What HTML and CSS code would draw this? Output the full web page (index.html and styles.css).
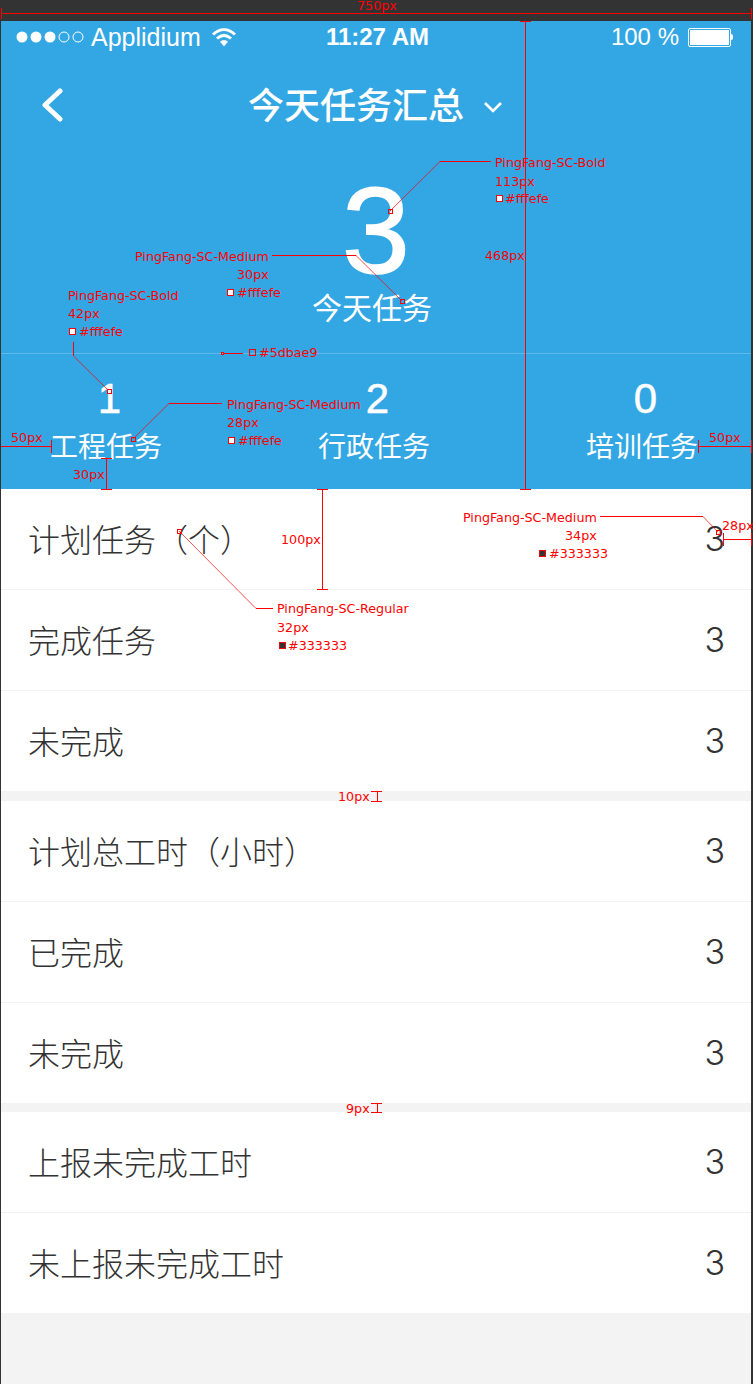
FILE: index.html
```html
<!DOCTYPE html>
<html>
<head>
    <title>今天任务汇总</title>
    <link rel="stylesheet" href="styles.css">
</head>
<body>
    <div class="frame">
        <div class="hero">
            <div class="status">
                <div class="status-left">
                    <svg class="signal" width="68" height="14" viewBox="0 0 68 14">
                        <circle cx="6" cy="7" r="5.5" fill="#fff"/>
                        <circle cx="20" cy="7" r="5.5" fill="#fff"/>
                        <circle cx="34" cy="7" r="5.5" fill="#fff"/>
                        <circle cx="48" cy="7" r="5" fill="none" stroke="#fff"/>
                        <circle cx="62" cy="7" r="5" fill="none" stroke="#fff"/>
                    </svg>
                    <span class="carrier">Applidium</span>
                    <svg class="wifi" width="26" height="20" viewBox="0 0 26 20">
                        <path d="M2 7.5C9 1 17 1 24 7.5M6 11.5C10.500 7.500 15.500 7.500 20 11.500" fill="none" stroke="#fff" stroke-width="3"/>
                        <path d="M9 14.500C11.500 12.500 14.500 12.500 17 14.500L13 19.500Z" fill="#fff"/>
                    </svg>
                </div>
                <div class="clock">11:27 AM</div>
                <div class="status-right">
                    <span class="percent">100 %</span>
                    <div class="battery"><div class="battery-fill"></div></div>
                    <div class="battery-tip"></div>
                </div>
            </div>
            <div class="nav">
                <svg class="back" width="24" height="34" viewBox="0 0 24 34">
                    <path d="M20 3L5 17L20 31" fill="none" stroke="#fff" stroke-width="5" stroke-linecap="round" stroke-linejoin="round"/>
                </svg>
                <h1 class="title">今天任务汇总</h1>
                <svg class="caret" width="20" height="12" viewBox="0 0 20 12">
                    <path d="M2 2L10 10L18 2" fill="none" stroke="#fff" stroke-width="2.600"/>
                </svg>
            </div>
            <div class="total">
                <div class="total-num">3</div>
                <div class="total-label">今天任务</div>
            </div>
            <div class="stats">
                <div class="stat">
                    <div class="stat-num">1</div>
                    <div class="stat-label">工程任务</div>
                </div>
                <div class="stat">
                    <div class="stat-num">2</div>
                    <div class="stat-label">行政任务</div>
                </div>
                <div class="stat">
                    <div class="stat-num">0</div>
                    <div class="stat-label">培训任务</div>
                </div>
            </div>
        </div>

        <div class="group">
            <div class="row"><span>计划任务（个）</span><span class="val">3</span></div>
            <div class="row"><span>完成任务</span><span class="val">3</span></div>
            <div class="row"><span>未完成</span><span class="val">3</span></div>
        </div>
        <div class="group group-mid">
            <div class="row"><span>计划总工时（小时）</span><span class="val">3</span></div>
            <div class="row"><span>已完成</span><span class="val">3</span></div>
            <div class="row"><span>未完成</span><span class="val">3</span></div>
        </div>
        <div class="group group-last">
            <div class="row"><span>上报未完成工时</span><span class="val">3</span></div>
            <div class="row"><span>未上报未完成工时</span><span class="val">3</span></div>
        </div>
    </div>

    <!-- red spec marks drawn over the design -->
    <svg class="marks" width="753" height="1384" viewBox="0 0 753 1384">
        <path d="M1.500 13.500H751.500M1.500 8V19M751.500 8V19"/>
        <text x="357" y="10">750px</text>

        <path d="M525.500 21V489M520 21.500H531M520 489.500H531"/>
        <text x="485" y="260">468px</text>

        <path class="thin" d="M390 211L440 161.500"/>
        <path d="M440 161.500H491"/>
        <rect x="388.500" y="209.500" width="4" height="4"/>
        <text x="495" y="167">PingFang-SC-Bold</text>
        <text x="495" y="186">113px</text>
        <rect class="swatch" x="496.500" y="195.500" width="6" height="6"/>
        <text x="505" y="203">#fffefe</text>

        <path class="thin" d="M356 255.500L402 301"/>
        <path d="M272 255.500H356"/>
        <rect x="400.500" y="299.500" width="4" height="4"/>
        <text x="135" y="261">PingFang-SC-Medium</text>
        <text x="237" y="279">30px</text>
        <rect class="swatch" x="227.500" y="289.500" width="6" height="6"/>
        <text x="237" y="297">#fffefe</text>

        <path class="thin" d="M73.500 356L109 391"/>
        <path d="M73.500 342V356"/>
        <rect class="swatch" x="107.500" y="389.500" width="4" height="4"/>
        <text x="68" y="300">PingFang-SC-Bold</text>
        <text x="68" y="318">42px</text>
        <rect class="swatch" x="69.500" y="328.500" width="6" height="6"/>
        <text x="79" y="336">#fffefe</text>

        <path d="M224 353.500H243"/>
        <rect x="221.500" y="352.500" width="2" height="2"/>
        <rect class="hollow" x="249.500" y="349.500" width="6" height="6"/>
        <text x="259" y="357">#5dbae9</text>

        <path class="thin" d="M133 439L169 403.500"/>
        <path d="M169 403.500H222"/>
        <rect x="131.500" y="437.500" width="4" height="4"/>
        <text x="227" y="409">PingFang-SC-Medium</text>
        <text x="227" y="427">28px</text>
        <rect class="swatch" x="228.500" y="437.500" width="6" height="6"/>
        <text x="238" y="445">#fffefe</text>

        <path d="M1 446.500H51.500M51.500 440V453"/>
        <text x="11" y="442">50px</text>
        <path d="M106.500 458V489M101 458.500H112M101 489.500H112"/>
        <text x="73" y="479">30px</text>
        <path d="M698.500 446.500H751.500M698.500 440V453M751.500 440V453"/>
        <text x="709" y="442">50px</text>

        <path d="M322.500 489V589M317 489.500H328M317 589.500H328"/>
        <text x="281" y="544">100px</text>

        <path class="thin" d="M703 516.500L718 532"/>
        <path d="M600 516.500H703"/>
        <rect x="716.500" y="530.500" width="4" height="4"/>
        <text x="463" y="522">PingFang-SC-Medium</text>
        <text x="565" y="540">34px</text>
        <rect class="dark" x="539.500" y="550.500" width="6" height="6"/>
        <text x="549" y="558">#333333</text>

        <path d="M723.500 539.500H751.500M723.500 533V546M751.500 533V546"/>
        <text x="722" y="530">28px</text>

        <path class="thin" d="M179 531L256 608.500"/>
        <path d="M256 608.500H273"/>
        <rect class="hollow" x="177.500" y="529.500" width="4" height="4"/>
        <text x="277" y="613">PingFang-SC-Regular</text>
        <text x="277" y="632">32px</text>
        <rect class="dark" x="279.500" y="642.500" width="6" height="6"/>
        <text x="288" y="650">#333333</text>

        <text x="338" y="801">10px</text>
        <path d="M371 791.500H382M377 791.500V801.500M371 801.500H382"/>
        <text x="346" y="1113">9px</text>
        <path d="M371 1103.500H382M377 1103.500V1112.500M371 1112.500H382"/>
    </svg>
</body>
</html>
```

FILE: styles.css
```css
body{
    margin: 0;
    padding: 0;
    width: 753px;
    height: 1384px;
    overflow: hidden;
    position: relative;
    background-color: #333;
    font-family: "Noto Sans CJK SC", "Liberation Sans", sans-serif;
}
.frame{
    margin: 21px 2px 0 1px;
    height: 1363px;
    background-color: #f3f3f3;
}
.hero{
    height: 468px;
    background-color: #33a7e4;
    color: #fffefe;
    display: flex;
    flex-direction: column;
}
.status{
    height: 32px;
    padding: 0 18px 0 15px;
    display: flex;
    align-items: center;
    justify-content: space-between;
    font-family: "Liberation Sans", sans-serif;
    font-size: 25px;
    color: #fff;
}
.status-left{
    width: 240px;
    display: flex;
    align-items: center;
}
.carrier{
    margin-left: 7px;
}
.wifi{
    margin-left: 10px;
}
.clock{
    font-size: 24px;
    font-weight: 700;
    margin-left: 6px;
}
.status-right{
    width: 240px;
    display: flex;
    align-items: center;
    justify-content: flex-end;
}
.percent{
    font-size: 24px;
}
.battery{
    width: 39px;
    height: 15px;
    margin-left: 9px;
    padding: 1px;
    border: 1px solid #fff;
    border-radius: 2px;
}
.battery-fill{
    height: 100%;
    background-color: #fff;
}
.battery-tip{
    width: 2px;
    height: 6px;
    background-color: #fff;
    border-radius: 0 2px 2px 0;
}
.nav{
    height: 74px;
    margin-top: 15px;
    padding-left: 39px;
    display: flex;
    align-items: center;
}
.title{
    margin: -4px 0 0 184px;
    font-size: 36px;
    font-weight: 500;
    line-height: 44px;
}
.caret{
    margin-left: 19px;
    margin-top: 3px;
}
.total{
    height: 189px;
    margin-top: 22px;
    border-bottom: 1px solid #5dbae9;
    text-align: center;
}
.total-num{
    font-family: "Liberation Sans", sans-serif;
    font-size: 122px;
    line-height: 134px;
    -webkit-text-stroke: 1.5px #fffefe;
}
.total-label{
    margin-top: -12px;
    margin-right: 8px;
    font-size: 30px;
    line-height: 40px;
}
.stats{
    padding: 21px 53px 0 49px;
    display: flex;
    justify-content: space-between;
}
.stat{
    text-align: center;
}
.stat-num{
    padding-left: 7px;
    font-family: "Liberation Sans", sans-serif;
    font-size: 42px;
    line-height: 48px;
    -webkit-text-stroke: 0.5px #fffefe;
}
.stat-label{
    margin-top: 2px;
    font-size: 28px;
    line-height: 40px;
}
.group{
    background-color: #fff;
}
.group-mid{
    margin-top: 10px;
}
.group-last{
    margin-top: 9px;
}
.row{
    height: 98px;
    padding: 0 26px 2px 27px;
    border-bottom: 1px solid #f3f3f3;
    display: flex;
    align-items: center;
    justify-content: space-between;
    font-size: 32px;
    font-weight: 300;
    color: #333;
}
.row:last-child{
    border-bottom: none;
}
.val{
    font-family: "Inter", sans-serif;
    font-size: 34px;
    font-weight: 300;
}
.marks{
    position: absolute;
    top: 0;
    left: 0;
    font-family: "DejaVu Sans", sans-serif;
    font-size: 12.7px;
    shape-rendering: crispEdges;
}
.marks text{
    fill: #f00;
}
.marks path{
    fill: none;
    stroke: #f00;
}
.marks path.thin{
    stroke-width: 0.7;
    shape-rendering: geometricPrecision;
}
.marks rect{
    fill: none;
    stroke: #f00;
}
.marks rect.swatch{
    fill: #fff;
}
.marks rect.hollow{
    fill: none;
}
.marks rect.dark{
    fill: #333;
}
```
